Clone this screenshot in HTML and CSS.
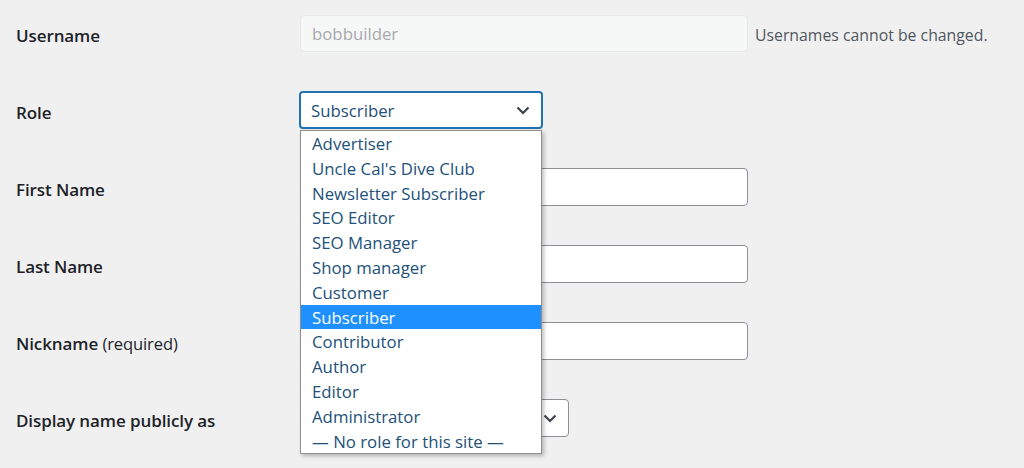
FILE: index.html
```html
<!DOCTYPE html>
<html>
<head>
<meta charset="utf-8">
<link rel="stylesheet" href="styles.css">
</head>
<body>
<div class="form">
  <div class="row">
    <div class="label">Username</div>
    <div class="field">
      <div class="input disabled">bobbuilder</div>
      <span class="desc">Usernames cannot be changed.</span>
    </div>
  </div>
  <div class="row">
    <div class="label">Role</div>
    <div class="field role-field">
      <div class="select focused role-select">
        <span>Subscriber</span>
        <svg class="chev" width="14" height="9" viewBox="0 0 14 9"><polyline points="1.5,1.5 7,7 12.5,1.5" fill="none" stroke="#3c434a" stroke-width="2.2"/></svg>
      </div>
      <ul class="dropdown">
        <li>Advertiser</li>
        <li>Uncle Cal's Dive Club</li>
        <li>Newsletter Subscriber</li>
        <li>SEO Editor</li>
        <li>SEO Manager</li>
        <li>Shop manager</li>
        <li>Customer</li>
        <li class="sel">Subscriber</li>
        <li>Contributor</li>
        <li>Author</li>
        <li>Editor</li>
        <li>Administrator</li>
        <li>— No role for this site —</li>
      </ul>
    </div>
  </div>
  <div class="row">
    <div class="label">First Name</div>
    <div class="field"><div class="input"></div></div>
  </div>
  <div class="row">
    <div class="label">Last Name</div>
    <div class="field"><div class="input"></div></div>
  </div>
  <div class="row">
    <div class="label">Nickname <span class="req">(required)</span></div>
    <div class="field"><div class="input"></div></div>
  </div>
  <div class="row">
    <div class="label">Display name publicly as</div>
    <div class="field">
      <div class="select display-select">
        <span></span>
        <svg class="chev" width="14" height="9" viewBox="0 0 14 9"><polyline points="1.5,1.5 7,7 12.5,1.5" fill="none" stroke="#3c434a" stroke-width="2.2"/></svg>
      </div>
    </div>
  </div>
</div>
</body>
</html>
```
FILE: styles.css
```css
html, body {
  margin: 0;
  padding: 0;
  background: #f0f0f1;
}
body {
  font-family: "Open Sans", "Noto Sans", sans-serif;
  color: #1d2327;
  width: 1024px;
  height: 468px;
  overflow: hidden;
}
.form {
  display: flex;
  flex-direction: column;
  gap: 39px;
  padding-top: 14px;
}
.row {
  display: flex;
  align-items: center;
  height: 38px;
}
.label {
  width: 284px;
  padding-left: 16px;
  padding-top: 4px;
  font-size: 17px;
  font-weight: 600;
  color: #1d2327;
  letter-spacing: -0.1px;
}
.req {
  font-weight: 400;
  font-size: 16.5px;
}
.field {
  display: flex;
  align-items: center;
  gap: 7px;
  position: relative;
}
.input {
  box-sizing: border-box;
  width: 448px;
  height: 38px;
  background: #fff;
  border: 1px solid #8c8f94;
  border-radius: 4px;
  display: flex;
  align-items: center;
  padding-left: 11px;
  font-size: 16.8px;
}
.input.disabled {
  background: #f6f7f7;
  border-color: #e8e8ea;
  color: #a7aaad;
  height: 37px;
}
.desc {
  font-size: 15.8px;
  color: #50575e;
  padding-top: 3px;
}
.select {
  box-sizing: border-box;
  height: 38px;
  background: #fff;
  border: 1px solid #8c8f94;
  border-radius: 4px;
  display: flex;
  align-items: center;
  justify-content: space-between;
  padding: 0 11px 0 11px;
  font-size: 16.8px;
  color: #2c3338;
}
.role-field {
  margin-left: -1px;
}
.select.focused {
  border: 2px solid #2271b1;
  padding-left: 10px;
  color: #1f4f76;
}
.role-select {
  width: 244px;
}
.display-select {
  width: 269px;
}
.chev {
  display: block;
}
.dropdown {
  position: absolute;
  top: 39px;
  left: 1px;
  width: 242px;
  box-sizing: border-box;
  margin: 0;
  padding: 0;
  list-style: none;
  background: #fff;
  border: 1px solid #8f8f8f;
  box-shadow: 2px 2px 4px rgba(0,0,0,0.25);
  z-index: 10;
}
.dropdown li {
  height: 24.8px;
  line-height: 26px;
  padding-left: 11px;
  font-size: 16.8px;
  color: #225179;
  white-space: nowrap;
  overflow: hidden;
}
.dropdown li.sel {
  background: #1e90ff;
  color: #fff;
}
```
